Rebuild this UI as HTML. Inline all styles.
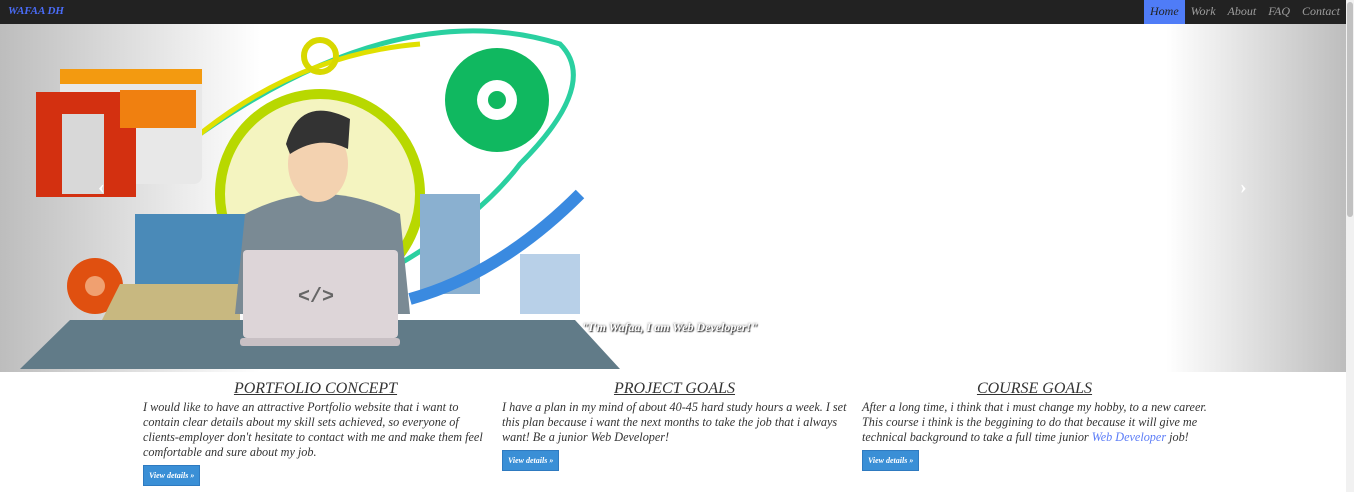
<!DOCTYPE html>
<html><head><meta charset="utf-8"><style>
*{margin:0;padding:0;box-sizing:border-box}
body{width:1354px;height:492px;overflow:hidden;background:#fff;font-family:"Liberation Serif",serif;font-style:italic;color:#333}
.nav{position:absolute;left:0;top:0;width:1346px;height:24px;background:#222}
.brand{position:absolute;left:8px;top:5px;font-size:11px;font-weight:bold;color:#4a6cf7}
.links{position:absolute;right:0;top:0;display:flex;height:24px}
.links a{display:block;padding:4px 6px;font-size:12px;color:#9d9d9d;text-decoration:none}
.links a.act{background:#4f7cf7;color:#222}
.sb{position:absolute;right:0;top:0;width:8px;height:492px;background:#f1f1f1}
.sb div{position:absolute;left:1px;top:2px;width:6px;height:215px;background:#c1c1c1;border-radius:3px}
.car{position:absolute;left:0;top:24px;width:1346px;height:348px;background:#fff;overflow:hidden}
.lg{position:absolute;left:0;top:0;width:260px;height:348px;background:linear-gradient(to right,#bdbdbd,rgba(255,255,255,0))}
.rg{position:absolute;right:0;top:0;width:180px;height:348px;background:linear-gradient(to left,#bdbdbd,rgba(255,255,255,0))}
.cap{position:absolute;left:582px;top:296px;font-size:12px;color:#fff;font-weight:bold;text-shadow:0 0 2px #555,1px 1px 1px #333}
.arrow{position:absolute;top:152px;color:#fff;font-size:20px;font-weight:bold;font-style:normal}
.col{position:absolute;top:381px;width:350px;font-size:12.2px;line-height:15px;color:#333}
.col h2{width:345px;text-align:center;font-weight:normal;font-size:16px;text-decoration:underline;margin-bottom:4px;color:#333}
.btn{display:inline-block;margin-top:5px;background:#3a8fd6;border:1px solid #2e7ac0;color:#fff;font-size:8px;font-weight:bold;padding:2px 5px}
.col a.l{color:#5b7cf7;text-decoration:none}
</style></head><body>
<div class="nav"><div class="brand">WAFAA DH</div>
<div class="links"><a class="act">Home</a><a>Work</a><a>About</a><a>FAQ</a><a>Contact</a></div></div>
<div class="car">
<div class="lg"></div><div class="rg"></div>
<svg width="620" height="348" style="position:absolute;left:0;top:0">
<path d="M200 110 Q400 -30 560 20 Q600 60 520 140 Q460 220 300 290" fill="none" stroke="#2ad0a0" stroke-width="5"/>
<path d="M200 110 Q300 30 420 20" fill="none" stroke="#e0e000" stroke-width="5"/>
<rect x="60" y="45" width="142" height="115" rx="8" fill="#e8e8e8"/>
<rect x="36" y="68" width="100" height="105" fill="#d33010"/>
<rect x="60" y="45" width="142" height="15" fill="#f39a10"/>
<rect x="120" y="66" width="76" height="38" fill="#f08010"/>
<rect x="62" y="90" width="42" height="80" fill="#d8d8d8"/>
<circle cx="320" cy="170" r="100" fill="#f4f4c0" stroke="#b8d800" stroke-width="10"/>
<circle cx="320" cy="32" r="16" fill="none" stroke="#d8d800" stroke-width="6"/>
<circle cx="497" cy="76" r="52" fill="#10b860"/>
<circle cx="497" cy="76" r="20" fill="#fff"/><circle cx="497" cy="76" r="9" fill="#10b860"/>
<rect x="135" y="190" width="110" height="80" fill="#4a8ab8"/>
<rect x="420" y="170" width="60" height="100" fill="#8ab0d0"/>
<path d="M410 275 Q500 250 580 170" fill="none" stroke="#3a8ae0" stroke-width="12"/>
<rect x="520" y="230" width="60" height="60" fill="#b8d0e8"/>
<circle cx="95" cy="262" r="28" fill="#e05010"/><circle cx="95" cy="262" r="10" fill="#f0a070"/>
<path d="M120 260 L240 260 L240 300 L100 300Z" fill="#c8b880"/>
<path d="M70 296 L575 296 L620 345 L20 345Z" fill="#617b88"/>
<path d="M245 190 Q320 150 400 190 L410 290 L235 290Z" fill="#7a8a94"/>
<ellipse cx="318" cy="140" rx="30" ry="38" fill="#f3d2b0"/>
<path d="M286 120 Q300 70 350 95 L348 125 Q320 110 290 130Z" fill="#333"/>
<rect x="243" y="226" width="155" height="88" rx="4" fill="#ddd5d8"/>
<rect x="240" y="314" width="160" height="8" rx="3" fill="#c8c0c4"/>
<text x="298" y="278" font-family="Liberation Mono" font-style="normal" font-size="20" font-weight="bold" fill="#666">&lt;/&gt;</text>
</svg>
<div class="cap">"I'm Wafaa, I am Web Developer!"</div>
<div class="arrow" style="left:98px">‹</div>
<div class="arrow" style="left:1240px">›</div>
</div>
<div class="col" style="left:143px"><h2>PORTFOLIO CONCEPT</h2>I would like to have an attractive Portfolio website that i want to contain clear details about my skill sets achieved, so everyone of clients-employer don't hesitate to contact with me and make them feel comfortable and sure about my job.<br><span class="btn">View details »</span></div>
<div class="col" style="left:502px"><h2>PROJECT GOALS</h2>I have a plan in my mind of about 40-45 hard study hours a week. I set this plan because i want the next months to take the job that i always want! Be a junior Web Developer!<br><span class="btn">View details »</span></div>
<div class="col" style="left:862px"><h2>COURSE GOALS</h2>After a long time, i think that i must change my hobby, to a new career. This course i think is the beggining to do that because it will give me technical background to take a full time junior <a class="l">Web Developer</a> job!<br><span class="btn">View details »</span></div>
<div class="sb"><div></div></div>
</body></html>
